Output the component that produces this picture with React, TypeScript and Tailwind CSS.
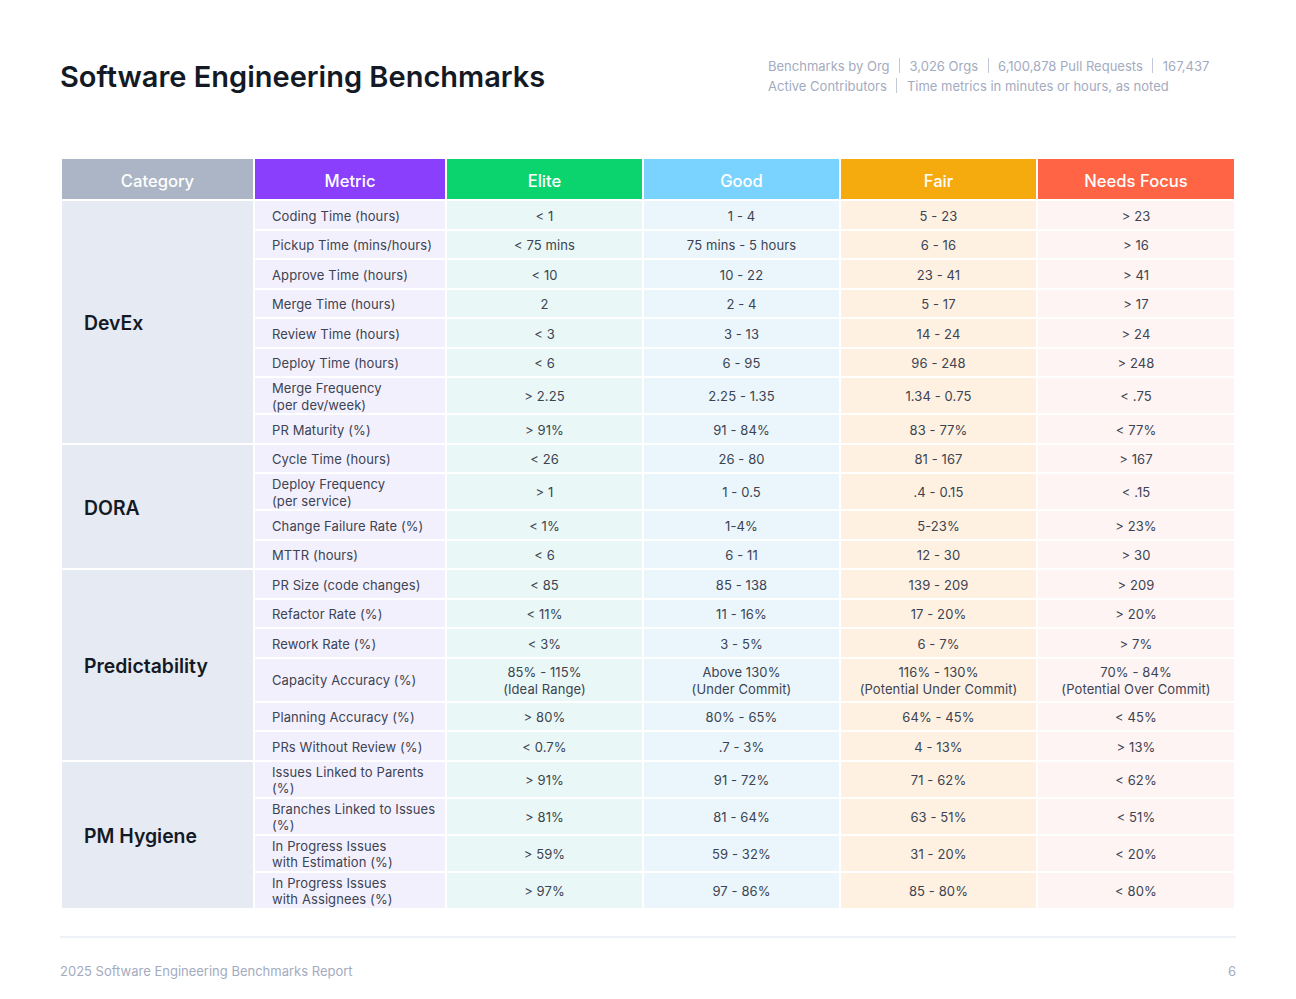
import React from "react";

type Row = { m: React.ReactNode; v: React.ReactNode[] };
type Group = { name: string; rows: Row[] };

const two = (a: string, b: string) => (
  <>
    {a}
    <br />
    {b}
  </>
);

const groups: Group[] = [
  {
    name: "DevEx",
    rows: [
      { m: "Coding Time (hours)", v: ["< 1", "1 - 4", "5 - 23", "> 23"] },
      { m: "Pickup Time (mins/hours)", v: ["< 75 mins", "75 mins - 5 hours", "6 - 16", "> 16"] },
      { m: "Approve Time (hours)", v: ["< 10", "10 - 22", "23 - 41", "> 41"] },
      { m: "Merge Time (hours)", v: ["2", "2 - 4", "5 - 17", "> 17"] },
      { m: "Review Time (hours)", v: ["< 3", "3 - 13", "14 - 24", "> 24"] },
      { m: "Deploy Time (hours)", v: ["< 6", "6 - 95", "96 - 248", "> 248"] },
      { m: two("Merge Frequency", "(per dev/week)"), v: ["> 2.25", "2.25 - 1.35", "1.34 - 0.75", "< .75"] },
      { m: "PR Maturity (%)", v: ["> 91%", "91 - 84%", "83 - 77%", "< 77%"] },
    ],
  },
  {
    name: "DORA",
    rows: [
      { m: "Cycle Time (hours)", v: ["< 26", "26 - 80", "81 - 167", "> 167"] },
      { m: two("Deploy Frequency", "(per service)"), v: ["> 1", "1 - 0.5", ".4 - 0.15", "< .15"] },
      { m: "Change Failure Rate (%)", v: ["< 1%", "1-4%", "5-23%", "> 23%"] },
      { m: "MTTR (hours)", v: ["< 6", "6 - 11", "12 - 30", "> 30"] },
    ],
  },
  {
    name: "Predictability",
    rows: [
      { m: "PR Size (code changes)", v: ["< 85", "85 - 138", "139 - 209", "> 209"] },
      { m: "Refactor Rate (%)", v: ["< 11%", "11 - 16%", "17 - 20%", "> 20%"] },
      { m: "Rework Rate (%)", v: ["< 3%", "3 - 5%", "6 - 7%", "> 7%"] },
      {
        m: "Capacity Accuracy (%)",
        v: [
          two("85% - 115%", "(Ideal Range)"),
          two("Above 130%", "(Under Commit)"),
          two("116% - 130%", "(Potential Under Commit)"),
          two("70% - 84%", "(Potential Over Commit)"),
        ],
      },
      { m: "Planning Accuracy (%)", v: ["> 80%", "80% - 65%", "64% - 45%", "< 45%"] },
      { m: "PRs Without Review (%)", v: ["< 0.7%", ".7 - 3%", "4 - 13%", "> 13%"] },
    ],
  },
  {
    name: "PM Hygiene",
    rows: [
      { m: two("Issues Linked to Parents", "(%)"), v: ["> 91%", "91 - 72%", "71 - 62%", "< 62%"] },
      { m: two("Branches Linked to Issues", "(%)"), v: ["> 81%", "81 - 64%", "63 - 51%", "< 51%"] },
      { m: two("In Progress Issues", "with Estimation (%)"), v: ["> 59%", "59 - 32%", "31 - 20%", "< 20%"] },
      { m: two("In Progress Issues", "with Assignees (%)"), v: ["> 97%", "97 - 86%", "85 - 80%", "< 80%"] },
    ],
  },
];

const valueBg = ["bg-[#e9f8f6]", "bg-[#eaf6fb]", "bg-[#fef1e1]", "bg-[#fef4f3]"];

function Sep() {
  return <span className="inline-block w-px h-[15px] bg-[#c3c9d6] mx-[9.5px] align-[-2px]" />;
}

export default function App() {
  return (
    <div
      className="w-[1296px] h-[999px] bg-white relative"
      style={{ fontFamily: "Inter, 'Noto Sans', sans-serif" }}
    >
      <div className="px-[60px]">
        <div className="flex justify-between pt-[55px] h-[157px]">
          <h1 className="text-[29px] leading-[44px] font-semibold text-[#141a25]">
            Software Engineering Benchmarks
          </h1>
          <div className="w-[468px] text-[13px] leading-[20px] text-[#a3abbf] pt-[1px] whitespace-nowrap">
            <div>
              <span>Benchmarks by Org</span>
              <Sep />
              <span>3,026 Orgs</span>
              <Sep />
              <span>6,100,878 Pull Requests</span>
              <Sep />
              <span>167,437</span>
            </div>
            <div>
              <span>Active Contributors</span>
              <Sep />
              <span>Time metrics in minutes or hours, as noted</span>
            </div>
          </div>
        </div>
        <table className="w-full border-separate border-spacing-0.5 table-fixed">
          <colgroup>
            <col className="w-[191px]" />
            <col className="w-[190px]" />
            <col className="w-[195px]" />
            <col className="w-[195px]" />
            <col className="w-[195px]" />
            <col />
          </colgroup>
          <thead>
            <tr className="text-white text-[16.6px]">
              <th className="h-[40px] pt-[4px] bg-[#abb5c5] font-medium">Category</th>
              <th className="pt-[4px] bg-[#8a3ffc] font-medium">Metric</th>
              <th className="pt-[4px] bg-[#0bd46f] font-medium">Elite</th>
              <th className="pt-[4px] bg-[#7ad3fe] font-medium">Good</th>
              <th className="pt-[4px] bg-[#f5aa0d] font-medium">Fair</th>
              <th className="pt-[4px] bg-[#ff6445] font-medium">Needs Focus</th>
            </tr>
          </thead>
          <tbody className="text-[13px] leading-[16.5px] text-[#3c4352] tracking-[0.1px]">
            {groups.map((g) =>
              g.rows.map((r, i) => (
                <tr key={g.name + i}>
                  {i === 0 && (
                    <td
                      rowSpan={g.rows.length}
                      className="bg-[#e6eaf2] pl-[22px] pt-[3px] text-[19.4px] font-semibold text-[#141a25] tracking-normal"
                    >
                      {g.name}
                    </td>
                  )}
                  <td className="h-[27.5px] pt-[2px] pb-0 bg-[#f3f0fd] pl-[17px] pr-2">{r.m}</td>
                  {r.v.map((v, j) => (
                    <td key={j} className={`pt-[5.5px] pb-[3.5px] text-center ${valueBg[j]}`}>
                      {v}
                    </td>
                  ))}
                </tr>
              ))
            )}
          </tbody>
        </table>
        <div className="mt-[26px] h-[2px] bg-[#eef1f6]" />
        <div className="flex justify-between pt-[24px] text-[13px] text-[#a3abbf]">
          <span>2025 Software Engineering Benchmarks Report</span>
          <span>6</span>
        </div>
      </div>
    </div>
  );
}
